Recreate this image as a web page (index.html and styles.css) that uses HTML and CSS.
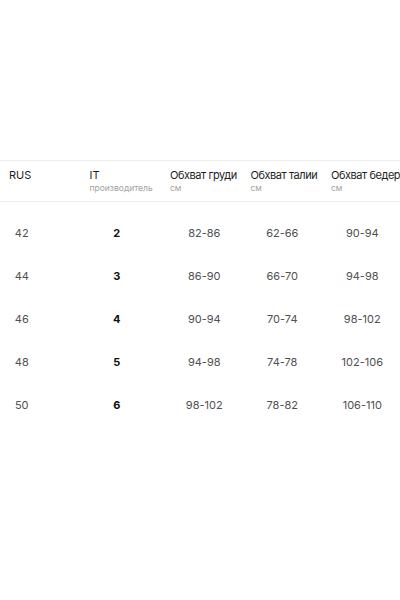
FILE: index.html
```html
<!DOCTYPE html>
<html lang="ru">
<head>
<meta charset="utf-8">
<title>Таблица размеров</title>
<link rel="stylesheet" href="styles.css">
</head>
<body>
<div class="sizes">
  <div class="table">
    <div class="head">
      <div class="hcell"><div class="title">RUS</div></div>
      <div class="hcell"><div class="title">IT</div><div class="sub">производитель</div></div>
      <div class="hcell"><div class="title cyr">Обхват груди</div><div class="sub">см</div></div>
      <div class="hcell"><div class="title cyr">Обхват талии</div><div class="sub">см</div></div>
      <div class="hcell"><div class="title cyr">Обхват бедер</div><div class="sub">см</div></div>
    </div>
    <div class="body">
      <div class="row">
        <div class="cell c1">42</div><div class="cell c2">2</div><div class="cell c3">82-86</div><div class="cell c4">62-66</div><div class="cell c5">90-94</div>
      </div>
      <div class="row">
        <div class="cell c1">44</div><div class="cell c2">3</div><div class="cell c3">86-90</div><div class="cell c4">66-70</div><div class="cell c5">94-98</div>
      </div>
      <div class="row">
        <div class="cell c1">46</div><div class="cell c2">4</div><div class="cell c3">90-94</div><div class="cell c4">70-74</div><div class="cell c5">98-102</div>
      </div>
      <div class="row">
        <div class="cell c1">48</div><div class="cell c2">5</div><div class="cell c3">94-98</div><div class="cell c4">74-78</div><div class="cell c5">102-106</div>
      </div>
      <div class="row">
        <div class="cell c1">50</div><div class="cell c2">6</div><div class="cell c3">98-102</div><div class="cell c4">78-82</div><div class="cell c5">106-110</div>
      </div>
    </div>
  </div>
</div>
</body>
</html>
```
FILE: styles.css
```css
html, body {
  margin: 0;
  padding: 0;
  background: #ffffff;
}
body {
  width: 400px;
  height: 600px;
  overflow: hidden;
  font-family: Inter, "Noto Sans", "Liberation Sans", sans-serif;
  color: #222222;
}
.sizes {
  padding-top: 160px;
  overflow: hidden;
}
.table {
  width: 420px;
}
.head {
  display: grid;
  grid-template-columns: repeat(5, 80.5px);
  padding-left: 9px;
  border-top: 1px solid #ececec;
  border-bottom: 1px solid #ececec;
  height: 40px;
  box-sizing: content-box;
}
.hcell {
  padding-top: 7px;
  white-space: nowrap;
}
.title {
  font-size: 11px;
  line-height: 14px;
  color: #1e1e1e;
}
.title.cyr {
  letter-spacing: -0.45px;
}
.sub {
  font-size: 8.5px;
  line-height: 12px;
  margin-top: 0;
  color: #a2a2a2;
}
.body {
  padding-top: 10px;
}
.row {
  display: grid;
  grid-template-columns: repeat(5, 80.5px);
  padding-left: 9px;
  height: 42.8px;
  align-items: center;
}
.cell {
  font-size: 11px;
  line-height: 14px;
  color: #505050;
  text-align: center;
  white-space: nowrap;
}
.c1 { padding-right: 55px; }
.c2 { padding-right: 26px; font-weight: 700; color: #111111; }
.c3 { padding-right: 12px; }
.c4 { padding-right: 17px; }
.c5 { padding-right: 18px; }
```
